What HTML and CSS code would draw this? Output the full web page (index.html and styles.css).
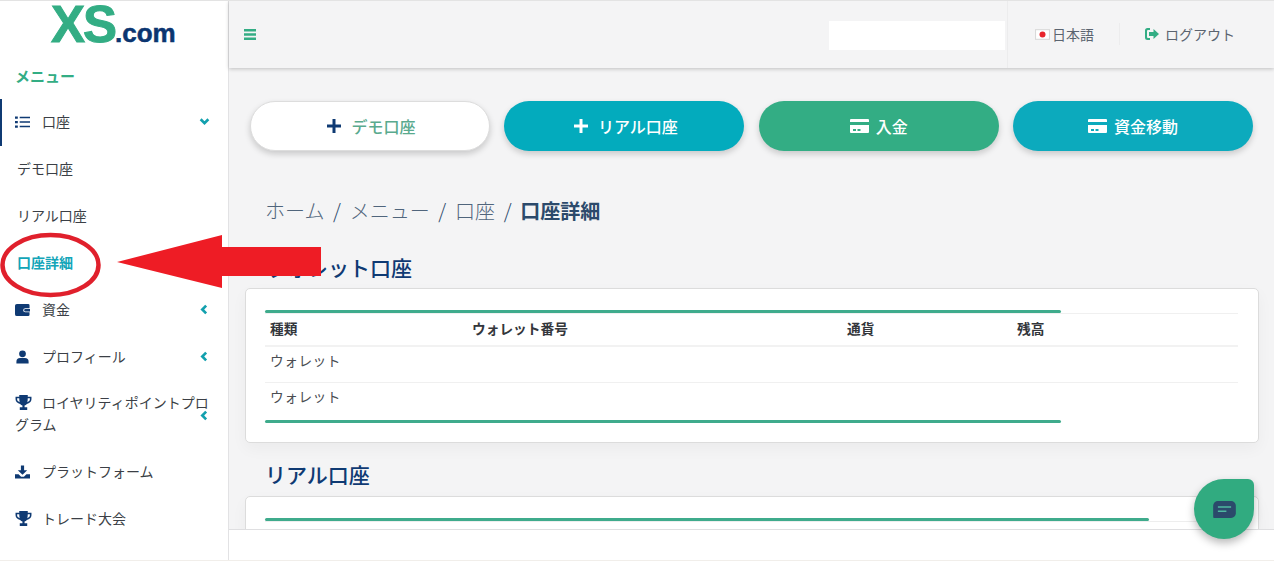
FILE: index.html
```html
<!DOCTYPE html>
<html lang="ja">
<head>
<meta charset="utf-8">
<title>口座詳細</title>
<link rel="stylesheet" href="styles.css">
</head>
<body>
<div class="app">
  <aside class="sidebar">
    <div class="logo"><span class="logo-xs">XS</span><span class="logo-com">.com</span></div>
    <div class="menu-title">メニュー</div>
    <nav>
      <a class="item open">
        <svg class="ico" viewBox="0 0 16 14"><path d="M0 1h3v2.400H0zM0 5.800h3v2.400H0zM0 10.600h3V13H0zM5 1.300h11v1.800H5zM5 6.100h11v1.800H5zM5 10.900h11v1.800H5z"/></svg>口座
        <svg class="chev" viewBox="0 0 10 10"><path d="M1.500 3 5 6.500 8.500 3" /></svg>
      </a>
      <a class="sub">デモ口座</a>
      <a class="sub">リアル口座</a>
      <a class="sub current">口座詳細</a>
      <a class="item">
        <svg class="ico" viewBox="0 0 16 14"><path d="M2 .5h12A1.500 1.500 0 0 1 15.500 2v3H11a2 2 0 0 0 0 4.500h4.500V12a1.500 1.500 0 0 1-1.500 1.500H2a2 2 0 0 1-2-2v-9a2 2 0 0 1 2-2zM11 6h5v2.500h-5a1.250 1.250 0 0 1 0-2.500z"/></svg>資金
        <svg class="chev" viewBox="0 0 10 10"><path d="M6.500 1.500 3 5l3.500 3.500"/></svg>
      </a>
      <a class="item">
        <svg class="ico" viewBox="0 0 16 14"><circle cx="8" cy="3.600" r="3.600"/><path d="M1.500 14v-2a4 4 0 0 1 4-4h5a4 4 0 0 1 4 4v2z"/></svg>プロフィール
        <svg class="chev" viewBox="0 0 10 10"><path d="M6.500 1.500 3 5l3.500 3.500"/></svg>
      </a>
      <a class="item long">
        <svg class="ico trophy" viewBox="0 0 16 14"><path d="M4 0h8v1.500h3.500V4c0 2.300-2 4-4.300 4.300-.6.8-1.300 1.300-2.200 1.500V11.500h2.500V14H4.500v-2.500H7V9.800C6.100 9.600 5.400 9.100 4.800 8.300 2.500 8 .5 6.300.5 4V1.500H4zM2 3v1c0 1.200.9 2.200 2.400 2.700C4.200 5.800 4 4.500 4 3zM12 3c0 1.500-.2 2.800-.4 3.700C13.100 6.200 14 5.200 14 4V3z"/></svg>ロイヤリティポイントプログラム
        <svg class="chev" viewBox="0 0 10 10"><path d="M6.500 1.500 3 5l3.500 3.500"/></svg>
      </a>
      <a class="item">
        <svg class="ico" viewBox="0 0 16 14"><path d="M6.300 0h3.400v5H13L8 10 3 5h3.300zM0 9.500h3.800L6.500 12h3l2.700-2.500H16V14H0z"/></svg>プラットフォーム
      </a>
      <a class="item">
        <svg class="ico trophy" viewBox="0 0 16 14"><path d="M4 0h8v1.500h3.500V4c0 2.300-2 4-4.300 4.300-.6.8-1.300 1.300-2.200 1.500V11.500h2.500V14H4.500v-2.500H7V9.800C6.100 9.600 5.400 9.100 4.800 8.300 2.500 8 .5 6.300.5 4V1.500H4zM2 3v1c0 1.200.9 2.200 2.400 2.700C4.200 5.800 4 4.500 4 3zM12 3c0 1.500-.2 2.800-.4 3.700C13.100 6.200 14 5.200 14 4V3z"/></svg>トレード大会
      </a>
    </nav>
  </aside>

  <div class="column">
    <header class="topbar">
      <svg class="burger" viewBox="0 0 12 11"><path d="M0 0h12v2.400H0zM0 4.300h12v2.400H0zM0 8.600h12V11H0z"/></svg>
      <div class="blank"></div>
      <div class="top-tools">
        <div class="lang">
          <svg class="flag" viewBox="0 0 14 10"><rect x=".5" y=".5" width="13" height="9" fill="#fff" stroke="#d9d9d9"/><circle cx="7" cy="5" r="2.800" fill="#e8242c"/></svg>日本語
        </div>
        <div class="logout">
          <svg class="logout-ico" viewBox="0 0 14 12"><path d="M5 0v2H3a1 1 0 0 0-1 1v6a1 1 0 0 0 1 1h2v2H2.500A2.500 2.500 0 0 1 0 9.500v-7A2.500 2.500 0 0 1 2.500 0zM8.500 1 14 6l-5.500 5V8H4V4h4.500z"/></svg>ログアウト
        </div>
      </div>
    </header>

    <main class="content">
      <div class="actions">
        <button class="btn btn-white"><svg class="plus" viewBox="0 0 14 14"><path d="M5.500 0h3v5.500H14v3H8.500V14h-3V8.500H0v-3h5.500z"/></svg>デモ口座</button>
        <button class="btn btn-teal"><svg class="plus" viewBox="0 0 14 14"><path d="M5.500 0h3v5.500H14v3H8.500V14h-3V8.500H0v-3h5.500z"/></svg>リアル口座</button>
        <button class="btn btn-green"><svg class="cardico" viewBox="0 0 19 14"><path d="M1 0h17a1 1 0 0 1 1 1v2H0V1a1 1 0 0 1 1-1zM0 6h19v7a1 1 0 0 1-1 1H1a1 1 0 0 1-1-1zm3 4v2h3v-2zm4.500 0v2h3v-2z" fill-rule="evenodd"/></svg>入金</button>
        <button class="btn btn-cyan"><svg class="cardico" viewBox="0 0 19 14"><path d="M1 0h17a1 1 0 0 1 1 1v2H0V1a1 1 0 0 1 1-1zM0 6h19v7a1 1 0 0 1-1 1H1a1 1 0 0 1-1-1zm3 4v2h3v-2zm4.500 0v2h3v-2z" fill-rule="evenodd"/></svg>資金移動</button>
      </div>

      <div class="crumbs">
        <span>ホーム</span><i>/</i><span>メニュー</span><i>/</i><span>口座</span><i>/</i><b>口座詳細</b>
      </div>

      <h2 class="section-title first">ウォレット口座</h2>
      <section class="card">
        <div class="bar bar-wallet"></div>
        <table class="grid-table">
          <thead>
            <tr><th class="c1">種類</th><th class="c2">ウォレット番号</th><th class="c3">通貨</th><th>残高</th></tr>
          </thead>
          <tbody>
            <tr><td>ウォレット</td><td></td><td></td><td></td></tr>
            <tr><td>ウォレット</td><td></td><td></td><td></td></tr>
          </tbody>
        </table>
        <div class="bar bar-wallet"></div>
      </section>

      <h2 class="section-title">リアル口座</h2>
      <section class="card card-tall">
        <div class="bar bar-real"></div>
        <div class="table-top"></div>
      </section>
    </main>

    <footer class="footer"></footer>
  </div>

  <svg class="annotation" viewBox="0 0 330 300">
    <ellipse cx="50.500" cy="265" rx="48" ry="30" fill="none" stroke="#e0202c" stroke-width="4.500"/>
    <path d="M117 262 222 235V247H321V276H222V288z" fill="#ee1c25"/>
  </svg>

  <div class="chat">
    <svg class="chat-ico" viewBox="0 0 24 18"><path d="M5 0h14a5 5 0 0 1 5 5v8a5 5 0 0 1-5 5H1a1 1 0 0 1-1-1V5a5 5 0 0 1 5-5z" fill="#2b4a6b"/><path d="M5 5.500h14v1.700H5zM5 10h9v1.700H5z" fill="#4fb8a0"/></svg>
  </div>
</div>
</body>
</html>
```

FILE: styles.css
```css
* { box-sizing: border-box; }

html, body {
  margin: 0;
  height: 100%;
  overflow: hidden;
  background: #f1eeea;
}

body {
  font-family: "Noto Sans CJK JP", "Noto Sans", sans-serif;
  font-size: 14px;
  color: #3b3f46;
}

.app {
  position: relative;
  display: flex;
  height: 560px;
  border-top: 1px solid #e3e3e3;
  overflow: hidden;
}

/* sidebar */
.sidebar {
  flex: 0 0 229px;
  background: #fff;
  border-right: 1px solid #e2e2e4;
  overflow: hidden;
}

.logo {
  height: 54px;
  padding: 0 0 0 51px;
  white-space: nowrap;
  font-family: "Liberation Sans", sans-serif;
  font-weight: 700;
  line-height: 47px;
}

.logo-xs {
  font-size: 51px;
  letter-spacing: -2px;
  color: #33ad84;
  -webkit-text-stroke: 1px #33ad84;
}

.logo-com {
  font-size: 26px;
  letter-spacing: 0;
  color: #0b3570;
  -webkit-text-stroke: .5px #0b3570;
}

.menu-title {
  height: 42px;
  padding-left: 15px;
  line-height: 42px;
  font-size: 15px;
  font-weight: 700;
  color: #33ad84;
}

nav a {
  display: block;
  position: relative;
}

.item {
  padding: 12.500px 15px;
  line-height: 22px;
  color: #3b3f46;
}

.item.open::before {
  content: "";
  position: absolute;
  left: 0;
  top: 2px;
  width: 2px;
  height: 47px;
  background: #0f3a73;
}

.item.long {
  padding-top: 11.500px;
}

.sub {
  height: 47px;
  padding-left: 17px;
  line-height: 49px;
  color: #3b3f46;
}

.sub.current {
  font-weight: 700;
  color: #12a5b8;
}

.ico {
  display: inline-block;
  width: 15px;
  height: 14px;
  margin-right: 12px;
  vertical-align: -2px;
  fill: #0f3a73;
}

.ico.trophy {
  width: 17px;
  height: 15px;
  margin-right: 10px;
}

.chev {
  position: absolute;
  top: 19px;
  left: 199px;
  width: 11px;
  height: 11px;
  fill: none;
  stroke: #12a0ae;
  stroke-width: 2.400;
}

.item.long .chev {
  top: 31px;
}

/* main column */
.column {
  flex: 1;
  min-width: 0;
  display: flex;
  flex-direction: column;
  background: #f4f4f5;
}

.topbar {
  position: relative;
  z-index: 1;
  flex: 0 0 67px;
  display: flex;
  align-items: center;
  padding-left: 15px;
  background: #f4f4f5;
  box-shadow: 0 1px 4px rgba(0, 0, 0, .22);
}

.burger {
  width: 12px;
  height: 11px;
  fill: #33ad84;
}

.blank {
  width: 176px;
  height: 29px;
  margin: 2px 0 0 573px;
  background: #fff;
}

.top-tools {
  flex: 1;
  align-self: stretch;
  display: flex;
  align-items: center;
  margin-left: 2px;
  padding-bottom: 2px;
  border-left: 1px solid #ececed;
  color: #5b6470;
  font-size: 14px;
}

.lang {
  display: flex;
  align-items: center;
  width: 112px;
  height: 22px;
  padding-left: 27px;
  border-right: 1px solid #ececed;
}

.flag {
  width: 15px;
  height: 11px;
  margin-right: 2px;
  margin-top: 2px;
}

.logout {
  display: flex;
  align-items: center;
  padding-left: 25px;
}

.logout-ico {
  width: 14px;
  height: 12px;
  margin-right: 6px;
  fill: #33ad84;
}

.content {
  flex: 1;
  min-height: 0;
  overflow: hidden;
  padding: 33px 21px 0 21px;
}

.actions {
  display: grid;
  grid-template-columns: repeat(4, 240px);
  justify-content: space-between;
}

.btn {
  display: flex;
  align-items: center;
  justify-content: center;
  height: 50px;
  border: 0;
  border-radius: 25px;
  font-family: inherit;
  font-size: 16px;
  font-weight: 500;
  color: #fff;
  box-shadow: 0 3px 6px rgba(0, 0, 0, .18);
}

.btn-white {
  background: #fff;
  border: 1px solid #ddd;
  color: #5aaa8e;
}

.btn-teal { background: #03abbd; }
.btn-green { background: #33ad84; }
.btn-cyan { background: #0caabd; }

.plus {
  width: 14px;
  height: 14px;
  margin: 0 10px 0 3px;
  fill: #fff;
}

.btn-white .plus { fill: #0f3a73; }

.cardico {
  width: 19px;
  height: 14px;
  margin-right: 7px;
  fill: #fff;
}

.crumbs {
  display: flex;
  align-items: center;
  height: 30px;
  margin: 44px 0 0 15px;
  font-size: 20px;
  font-weight: 300;
  color: #50657c;
}

.crumbs i {
  margin: 0 8.700px;
  font-style: normal;
  color: #2c4a6b;
}

.crumbs b {
  font-weight: 700;
  color: #2c4a6b;
}

.section-title {
  height: 30px;
  margin: 17px 0 6px 15px;
  font-size: 21px;
  font-weight: 500;
  line-height: 28px;
  color: #0f3a73;
}

.section-title.first {
  margin-top: 28px;
  margin-bottom: 5px;
}

.card {
  height: 155px;
  width: 1014px;
  margin-left: -5px;
  padding: 21px 19px 0;
  background: #fff;
  border: 1px solid #dcdcdc;
  border-radius: 5px;
  box-shadow: 0 6px 16px rgba(0, 0, 0, .04);
}

.card-tall { height: 200px; }

.bar {
  height: 3px;
  border-radius: 2px;
  background: #3fab8c;
}

.bar-wallet { width: 796px; }
.bar-real { width: 884px; }

.table-top {
  height: 1px;
  background: #eeeeee;
}

.grid-table {
  width: 973px;
  table-layout: fixed;
  border-collapse: collapse;
  font-size: 13.700px;
}

.grid-table th {
  height: 32px;
  padding: 0 0 3px 5px;
  border-top: 1px solid #f0f0f0;
  border-bottom: 2px solid #f2f2f2;
  text-align: left;
  font-weight: 700;
  color: #33363b;
}

.grid-table td {
  height: 37px;
  padding: 3px 0 0 5px;
  border-bottom: 1px solid #f0f0f0;
  vertical-align: top;
  letter-spacing: .5px;
  color: #4a4d52;
}

.grid-table tbody tr:last-child td { border-bottom: 0; }

.c1 { width: 202px; }
.c2 { width: 375px; }
.c3 { width: 170px; }

.footer {
  position: relative;
  flex: 0 0 31px;
  background: #fff;
  border-top: 1px solid #dfdfe1;
}

/* overlays */
.annotation {
  position: absolute;
  left: 0;
  top: -1px;
  width: 330px;
  height: 300px;
  pointer-events: none;
}

.chat {
  position: absolute;
  left: 1194px;
  top: 478px;
  display: flex;
  align-items: center;
  justify-content: center;
  width: 60px;
  height: 60px;
  border-radius: 50% 6px 50% 50%;
  background: #31ab80;
  box-shadow: 0 4px 8px rgba(0, 0, 0, .28);
}

.chat-ico {
  width: 23px;
  height: 17px;
}
```
